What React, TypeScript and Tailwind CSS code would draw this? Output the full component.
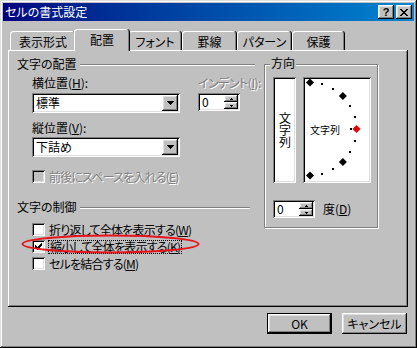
import React from 'react';

const raised =
  'shadow-[inset_-1px_-1px_#000,inset_1px_1px_#fff,inset_-2px_-2px_#808080,inset_2px_2px_#dfdfdf]';
const sunken =
  'shadow-[inset_1px_1px_#808080,inset_-1px_-1px_#fff,inset_2px_2px_#000,inset_-2px_-2px_#dfdfdf]';
const dim = 'text-[#808080] [text-shadow:1px_1px_0_#fff]';

const tabs = [
  { label: '表示形式', w: 'w-[66px]' },
  { label: '配置', w: 'w-[56px]', active: true },
  { label: 'フォント', w: 'w-[54px]' },
  { label: '罫線', w: 'w-[55px]' },
  { label: 'パターン', w: 'w-[55px]' },
  { label: '保護', w: 'w-[53px]' },
];

const arcPoints = [0, 15, 30, 45, 60, 75, 90, 105, 120, 135, 150, 165, 180].map((deg) => {
  const r = (deg * Math.PI) / 180;
  return { deg, x: 7 + 46.5 * Math.sin(r), y: 52 - 46.5 * Math.cos(r) };
});

const CheckMark = () => (
  <svg width="7" height="7" viewBox="0 0 7 7" shapeRendering="crispEdges">
    <path
      d="M6 0h1v1h-1z M5 1h2v1h-2z M0 2h1v1h-1z M4 2h3v1h-3z M0 3h2v1h-2z M3 3h3v1h-3z M0 4h5v1h-5z M1 5h3v1h-3z M2 6h1v1h-1z"
      fill="#000"
    />
  </svg>
);

const Box = ({ checked, disabled }: { checked?: boolean; disabled?: boolean }) => (
  <span
    className={`w-[13px] h-[13px] shrink-0 flex items-center justify-center ${sunken} ${
      disabled ? 'bg-[#c0c0c0]' : 'bg-white'
    }`}
  >
    {checked && <CheckMark />}
  </span>
);

const DownArrow = () => (
  <svg width="7" height="4" viewBox="0 0 7 4" shapeRendering="crispEdges">
    <path d="M0 0h7v1h-1v1h-1v1h-1v1h-1v-1h-1v-1h-1v-1h-1z" fill="#000" />
  </svg>
);

const Select = ({ value, className }: { value: string; className?: string }) => (
  <div className={`w-[148px] h-[20px] bg-white p-[2px] flex items-center ${sunken} ${className ?? ''}`}>
    <span className="flex-1 pl-[2px] leading-[14px]">{value}</span>
    <span className={`w-[16px] h-[16px] bg-[#c0c0c0] flex items-center justify-center ${raised}`}>
      <DownArrow />
    </span>
  </div>
);

const Spin = ({ className }: { className?: string }) => (
  <div className={`w-[42px] h-[18px] bg-white p-[2px] flex ${sunken} ${className ?? ''}`}>
    <span className="flex-1 pl-[2px] leading-[14px]">0</span>
    <span className="w-[14px] flex flex-col">
      <span className={`h-[7px] bg-[#c0c0c0] flex items-center justify-center ${raised}`}>
        <svg width="3" height="2" viewBox="0 0 3 2" shapeRendering="crispEdges">
          <path d="M1 0h1v1h1v1h-3v-1h1z" fill="#000" />
        </svg>
      </span>
      <span className={`h-[7px] bg-[#c0c0c0] flex items-center justify-center ${raised}`}>
        <svg width="3" height="2" viewBox="0 0 3 2" shapeRendering="crispEdges">
          <path d="M0 0h3v1h-1v1h-1v-1h-1z" fill="#000" />
        </svg>
      </span>
    </span>
  </div>
);

const Header = ({ text, className }: { text: string; className?: string }) => (
  <div className={`flex items-center h-[14px] ${className ?? ''}`}>
    <span className="leading-[14px]">{text}</span>
    <span className="flex-1 ml-[3px] mt-[2px] h-[2px] border-t border-[#808080] border-b border-b-white" />
  </div>
);

export default function App() {
  return (
    <div
      className={`w-[417px] h-[348px] bg-[#c0c0c0] p-[3px] text-[12px] text-black font-['Noto_Sans_CJK_JP',sans-serif] [font-feature-settings:'palt'] shadow-[inset_-1px_-1px_#000,inset_1px_1px_#dfdfdf,inset_-2px_-2px_#808080,inset_2px_2px_#fff]`}
    >
      {/* title bar */}
      <div className="h-[18px] bg-linear-to-r from-[#000080] to-[#1084d0] flex items-center pl-[2px] pr-[2px]">
        <span className="flex-1 text-white leading-[14px]">セルの書式設定</span>
        <span className={`w-[16px] h-[14px] bg-[#c0c0c0] flex items-center justify-center ${raised}`}>
          <span className="font-['Liberation_Sans',sans-serif] font-bold text-[11px] leading-none">?</span>
        </span>
        <span className={`ml-[2px] w-[16px] h-[14px] bg-[#c0c0c0] flex items-center justify-center ${raised}`}>
          <svg width="8" height="7" viewBox="0 0 8 7" shapeRendering="crispEdges">
            <path
              d="M0 0h2v1h-2z M6 0h2v1h-2z M1 1h2v1h-2z M5 1h2v1h-2z M2 2h4v1h-4z M3 3h2v1h-2z M2 4h4v1h-4z M1 5h2v1h-2z M5 5h2v1h-2z M0 6h2v1h-2z M6 6h2v1h-2z"
              fill="#000"
            />
          </svg>
        </span>
      </div>

      <div className="pl-[5px] pt-[8px]">
        {/* tabs */}
        <div className="relative z-10 flex items-end h-[21px] ml-[2px]">
          {tabs.map((t) =>
            t.active ? (
              <div
                key={t.label}
                className={`${t.w} h-[22px] -mb-px -mx-[2px] relative z-10 bg-[#c0c0c0] rounded-t-[3px] flex justify-center pt-[4px] leading-[14px] shadow-[inset_-1px_0_#000,inset_1px_1px_#fff,inset_-2px_0_#808080]`}
              >
                {t.label}
              </div>
            ) : (
              <div
                key={t.label}
                className={`${t.w} h-[19px] bg-[#c0c0c0] rounded-t-[3px] flex justify-center pt-[4px] leading-[14px] shadow-[inset_-1px_0_#000,inset_1px_1px_#fff,inset_-2px_0_#808080]`}
              >
                {t.label}
              </div>
            ),
          )}
        </div>

        {/* panel */}
        <div className="relative w-[400px] h-[257px] flex pl-[9px] pt-[7px] shadow-[inset_-1px_-1px_#000,inset_1px_1px_#fff,inset_-2px_-2px_#808080]">
          <div className="w-[238px] flex flex-col">
            <Header text="文字の配置" />
            <div className="flex pl-[15px] gap-[18px] mt-[5px]">
              <div className="flex flex-col">
                <span className="leading-[14px]">
                  横位置(<u>H</u>):
                </span>
                <Select className="mt-[3px]" value="標準" />
                <span className="leading-[14px] mt-[8px]">
                  縦位置(<u>V</u>):
                </span>
                <Select className="mt-[2px]" value="下詰め" />
              </div>
              <div className="flex flex-col">
                <span className={`leading-[14px] whitespace-nowrap tracking-[-0.5px] ${dim}`}>
                  インデント(<u>I</u>):
                </span>
                <Spin className="mt-[3px]" />
              </div>
            </div>

            <div className="flex items-center gap-[4px] pl-[15px] mt-[13px] h-[13px]">
              <Box disabled />
              <span className={`leading-[14px] whitespace-nowrap tracking-[-0.8px] ${dim}`}>
                前後にスペースを入れる(<u>E</u>)
              </span>
            </div>

            <Header text="文字の制御" className="mt-[17px] pr-[5px]" />

            <div className="flex items-center gap-[4px] pl-[15px] mt-[9px] h-[13px]">
              <Box />
              <span className="leading-[14px] whitespace-nowrap tracking-[-0.8px]">
                折り返して全体を表示する(<u>W</u>)
              </span>
            </div>
            <div className="relative flex items-center gap-[3px] pl-[15px] mt-[4px] h-[13px]">
              <Box checked />
              <span className="leading-[12px] px-[1px] whitespace-nowrap tracking-[-0.8px] border border-dotted border-black">
                縮小して全体を表示する(<u>K</u>)
              </span>
              <svg
                className="absolute left-[4px] top-[-6px] pointer-events-none"
                width="179"
                height="20"
                viewBox="0 0 179 20"
              >
                <ellipse cx="89.5" cy="10" rx="88" ry="8.5" fill="none" stroke="#e8141c" strokeWidth="2" />
              </svg>
            </div>
            <div className="flex items-center gap-[4px] pl-[15px] mt-[4px] h-[13px]">
              <Box />
              <span className="leading-[14px] whitespace-nowrap tracking-[-0.8px]">
                セルを結合する(<u>M</u>)
              </span>
            </div>
          </div>

          {/* 方向 */}
          <div className="relative ml-[9px] mt-[7px] w-[114px] h-[164px] border border-[#808080] shadow-[inset_1px_1px_#fff,1px_1px_#fff] pl-[8px] pt-[12px] flex flex-col">
            <span className="absolute left-[5px] -top-[9px] px-[1px] bg-[#c0c0c0] leading-[14px]">方向</span>
            <div className="flex gap-[7px]">
              <div className={`w-[23px] h-[106px] bg-white flex items-center justify-center ${sunken}`}>
                <span className="[writing-mode:vertical-rl] leading-[12px]">文字列</span>
              </div>
              <div className={`relative w-[68px] h-[106px] bg-white flex items-center pl-[7px] ${sunken}`}>
                <span className="text-[10px] leading-[12px]">文字列</span>
                <svg className="absolute inset-0" width="68" height="106" viewBox="0 0 68 106">
                  {arcPoints.map((p) =>
                    p.deg % 45 === 0 ? (
                      <polygon
                        key={p.deg}
                        points={`${p.x},${p.y - 4} ${p.x + 4},${p.y} ${p.x},${p.y + 4} ${p.x - 4},${p.y}`}
                        fill={p.deg === 90 ? '#e00000' : '#000'}
                      />
                    ) : (
                      <rect key={p.deg} x={Math.round(p.x) - 1} y={Math.round(p.y) - 1} width="2" height="2" fill="#000" />
                    ),
                  )}
                  <rect x="47" y="51" width="2" height="2" fill="#000" />
                </svg>
              </div>
            </div>
            <div className="flex items-center gap-[8px] mt-[17px]">
              <Spin />
              <span className="leading-[14px]">
                度(<u>D</u>)
              </span>
            </div>
          </div>
        </div>
      </div>

      {/* buttons */}
      <div className="flex justify-end gap-[10px] pr-[7px] mt-[6px]">
        <button
          className={`w-[65px] h-[21px] bg-[#c0c0c0] border border-black flex items-center justify-center leading-[14px] ${raised}`}
        >
          OK
        </button>
        <button className={`w-[65px] h-[21px] bg-[#c0c0c0] flex items-center justify-center leading-[14px] ${raised}`}>
          キャンセル
        </button>
      </div>
    </div>
  );
}
